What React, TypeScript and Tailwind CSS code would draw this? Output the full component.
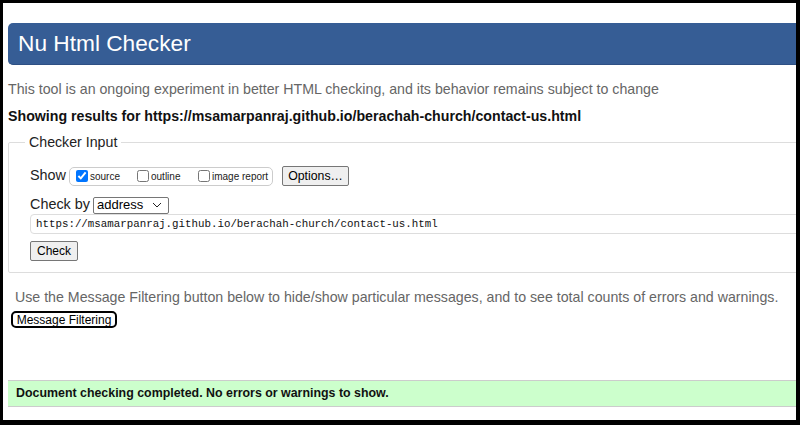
import React from "react";

export default function App() {
  return (
    <div className="w-[800px] h-[425px] bg-black pt-[3px] pl-[3px] overflow-hidden" style={{ fontFamily: '"Liberation Sans", Arial, sans-serif' }}>
      <div className="w-[793px] h-[417px] bg-white overflow-hidden">
        <div className="w-[860px] pl-[5px]">
          <div className="mt-[20px] h-[42px] bg-[#365d95] rounded-l-[5px] border-b border-[#2e5084] flex items-center pl-[10px]">
            <h1 className="text-white text-[22.7px] leading-none">Nu Html Checker</h1>
          </div>
          <p className="mt-[16px] text-[14.2px] leading-[17px] text-[#666]">This tool is an ongoing experiment in better HTML checking, and its behavior remains subject to change</p>
          <p className="mt-[10px] text-[14.2px] leading-[17px] font-bold text-[#111]">Showing results for https://msamarpanraj.github.io/berachah-church/contact-us.html</p>
          <div className="mt-[17px] relative border border-[#ddd] rounded-[2px] h-[131px] pl-[21px] pt-[23px]">
            <div className="absolute left-[16px] top-[-10px] bg-white px-[4px] text-[14.2px] leading-[18px] text-[#222]">Checker Input</div>
            <div className="flex items-center h-[20px]">
              <span className="text-[14.4px] text-[#222] mr-[3px]">Show</span>
              <div className="h-[19px] w-[204px] border border-[#ccc] rounded-[5px] flex items-center pl-[6px] text-[10px] text-[#222] whitespace-nowrap">
                <input type="checkbox" defaultChecked className="w-[12px] h-[12px] m-0 mr-[2px] accent-[#0075ff]" />
                <span className="w-[47px]">source</span>
                <input type="checkbox" className="w-[12px] h-[12px] m-0 mr-[2px]" />
                <span className="w-[47px]">outline</span>
                <input type="checkbox" className="w-[12px] h-[12px] m-0 mr-[2px]" />
                <span>image report</span>
              </div>
              <button className="ml-[9px] h-[20px] w-[67px] border border-[#767676] rounded-[2px] bg-[#efefef] text-[12.3px] text-black">Options…</button>
            </div>
            <div className="flex items-center mt-[10px] h-[18px]">
              <span className="text-[14.4px] text-[#222] mr-[3px]">Check by</span>
              <div className="h-[17px] w-[76px] border border-[#767676] rounded-[2px] flex items-center justify-between px-[3px] text-[13px] text-black">
                <span>address</span>
                <svg width="10" height="6" viewBox="0 0 10 6" className="mr-[3px]"><path d="M1 1 L5 5 L9 1" fill="none" stroke="#222" strokeWidth="1" /></svg>
              </div>
            </div>
            <div className="mt-0 h-[20px] border border-[#ddd] rounded-[4px] flex items-center pl-[5px] text-[10.8px] text-[#111] -mr-[1px]" style={{ fontFamily: '"Liberation Mono", "DejaVu Sans Mono", monospace' }}>https://msamarpanraj.github.io/berachah-church/contact-us.html</div>
            <button className="mt-[7px] h-[20px] w-[48px] border border-[#767676] rounded-[2px] bg-[#efefef] text-[12px] text-black block">Check</button>
          </div>
          <p className="mt-[16px] ml-[7px] text-[14.2px] leading-[17px] text-[#666]">Use the Message Filtering button below to hide/show particular messages, and to see total counts of errors and warnings.</p>
          <button className="mt-[5px] ml-[3px] h-[17px] w-[106px] border-2 border-black rounded-[5px] bg-white text-[12px] leading-none text-black block">Message Filtering</button>
          <div className="mt-[52px] h-[27px] bg-[#ccffcc] border-y border-[#ccc] flex items-center pl-[8px] text-[12.4px] font-bold text-[#111]">Document checking completed. No errors or warnings to show.</div>
          <div className="mt-[10px] text-[18px] font-bold text-[#111]">Source</div>
        </div>
      </div>
    </div>
  );
}
